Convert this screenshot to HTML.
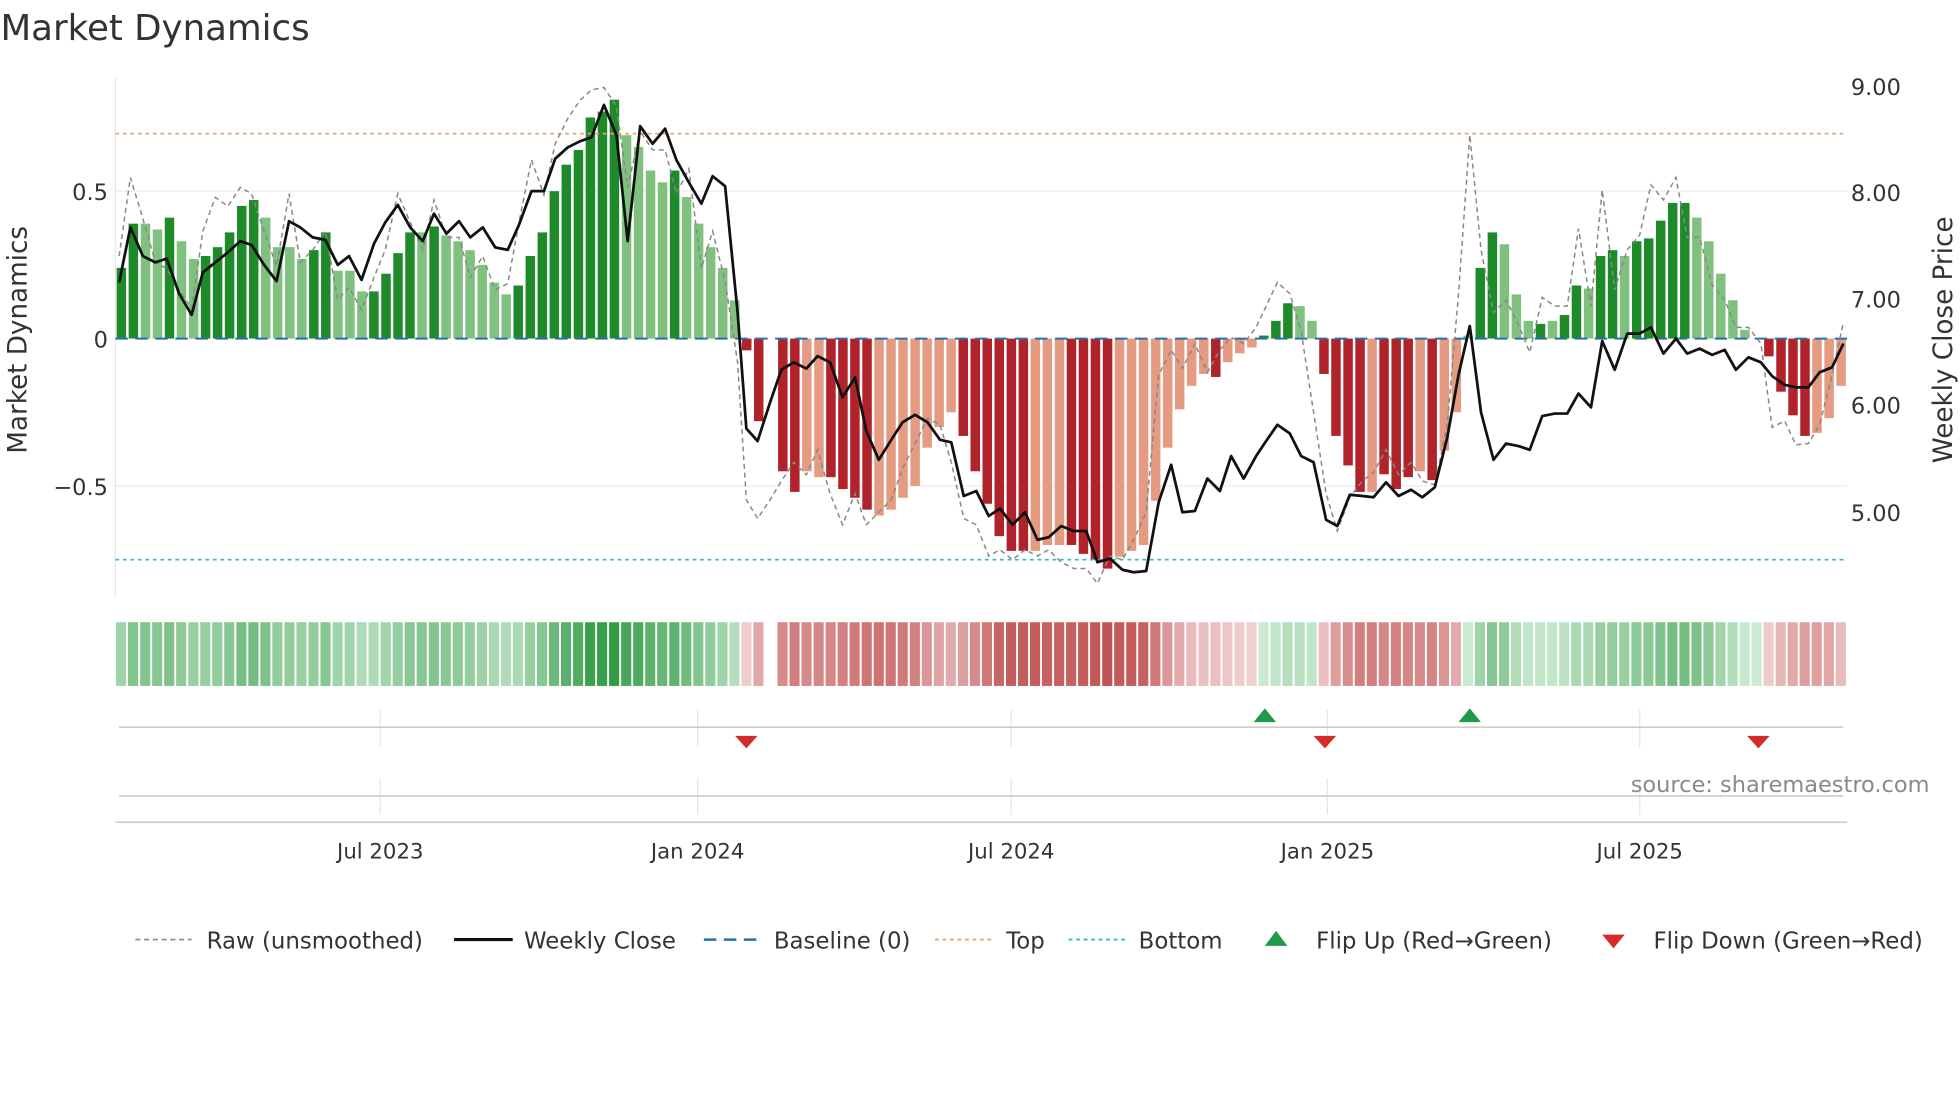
<!DOCTYPE html>
<html><head><meta charset="utf-8"><style>
html,body{margin:0;padding:0;background:#fff;width:1960px;height:1102px;overflow:hidden}
svg text{font-family:"DejaVu Sans","Liberation Sans",sans-serif;fill:#333}
</style></head><body>
<svg id="s" width="1960" height="1102" viewBox="0 0 1568 882" xmlns="http://www.w3.org/2000/svg">
<rect width="1568" height="882" fill="#fff"/>
<text x="0" y="32" font-size="28.5">Market Dynamics</text>
<line x1="92" y1="153" x2="1478" y2="153" stroke="#ececec"/>
<line x1="92" y1="389" x2="1478" y2="389" stroke="#ececec"/>
<line x1="92" y1="62" x2="92" y2="478" stroke="#e8e8e8"/>
<g id="bars"></g>
<line x1="92" y1="107" x2="1475" y2="107" stroke="#e8a070" stroke-dasharray="3,3" stroke-width="1.3"/>
<line x1="92" y1="448" x2="1475" y2="448" stroke="#2bbad0" stroke-dasharray="3,3" stroke-width="1.3"/>
<line x1="92" y1="271" x2="1478" y2="271" stroke="#2a6fa8" stroke-dasharray="10,6" stroke-width="1.6"/>
<polyline id="raw" fill="none" stroke="#888" stroke-width="1.2" stroke-dasharray="4,3"/>
<polyline id="close" fill="none" stroke="#111" stroke-width="2.2" stroke-linejoin="round"/>
<g font-size="18">
<text x="86" y="160" text-anchor="end">0.5</text>
<text x="86" y="278" text-anchor="end">0</text>
<text x="86" y="396" text-anchor="end">−0.5</text>
<text x="1481" y="76">9.00</text>
<text x="1481" y="161">8.00</text>
<text x="1481" y="246">7.00</text>
<text x="1481" y="331">6.00</text>
<text x="1481" y="417">5.00</text>
<text transform="translate(21,272) rotate(-90)" text-anchor="middle" font-size="21">Market Dynamics</text>
<text transform="translate(1562,272) rotate(-90)" text-anchor="middle" font-size="21">Weekly Close Price</text>
</g>
<g id="heat"></g>
<g stroke="#e6e6e6">
<line x1="304" y1="568" x2="304" y2="598"/><line x1="558" y1="568" x2="558" y2="598"/><line x1="809" y1="568" x2="809" y2="598"/><line x1="1062" y1="568" x2="1062" y2="598"/><line x1="1312" y1="568" x2="1312" y2="598"/>
<line x1="304" y1="623" x2="304" y2="652"/><line x1="558" y1="623" x2="558" y2="652"/><line x1="809" y1="623" x2="809" y2="652"/><line x1="1062" y1="623" x2="1062" y2="652"/><line x1="1312" y1="623" x2="1312" y2="652"/>
</g>
<line x1="95" y1="582" x2="1475" y2="582" stroke="#ccc" stroke-width="1.3"/>
<line x1="95" y1="637" x2="1475" y2="637" stroke="#ccc" stroke-width="1.3"/>
<line x1="92" y1="658" x2="1478" y2="658" stroke="#ccc" stroke-width="1.3"/>
<g fill="#1e9a48"><path d="M1003,578 L1021,578 L1012,567 Z"/><path d="M1167,578 L1185,578 L1176,567 Z"/></g>
<g fill="#d42a2a"><path d="M588,589 L606,589 L597,599 Z"/><path d="M1051,589 L1069,589 L1060,599 Z"/><path d="M1398,589 L1416,589 L1407,599 Z"/></g>
<text x="1544" y="634" text-anchor="end" font-size="18" style="fill:#8a8a8a">source: sharemaestro.com</text>
<g font-size="17" text-anchor="middle">
<text x="304" y="687">Jul 2023</text><text x="558" y="687">Jan 2024</text><text x="809" y="687">Jul 2024</text><text x="1062" y="687">Jan 2025</text><text x="1312" y="687">Jul 2025</text>
</g>
<g font-size="18.3">
<line x1="108" y1="752" x2="153" y2="752" stroke="#888" stroke-width="1.3" stroke-dasharray="4,3"/>
<text x="165" y="759">Raw (unsmoothed)</text>
<line x1="363" y1="752" x2="410" y2="752" stroke="#111" stroke-width="2.5"/>
<text x="419" y="759">Weekly Close</text>
<line x1="563" y1="752" x2="608" y2="752" stroke="#2a6fa8" stroke-width="2" stroke-dasharray="10,6"/>
<text x="619" y="759">Baseline (0)</text>
<line x1="748" y1="752" x2="793" y2="752" stroke="#e8a070" stroke-width="1.5" stroke-dasharray="3,3"/>
<text x="805" y="759">Top</text>
<line x1="855" y1="752" x2="900" y2="752" stroke="#2bbad0" stroke-width="1.5" stroke-dasharray="3,3"/>
<text x="911" y="759">Bottom</text>
<path d="M1012,757 L1030,757 L1021,745 Z" fill="#1e9a48"/>
<text x="1053" y="759">Flip Up (Red→Green)</text>
<path d="M1282,748 L1300,748 L1291,759 Z" fill="#d42a2a"/>
<text x="1323" y="759">Flip Down (Green→Red)</text>
</g>
</svg>
<script>
(function(){
var NS="http://www.w3.org/2000/svg";
function mix(a,c,t){var o=[];for(var k=0;k<3;k++){o.push(Math.round(a[k]+(c[k]-a[k])*t));}return 'rgb('+o.join(',')+')';}
function rect(g,x,y,w,h,f){var r=document.createElementNS(NS,'rect');r.setAttribute('x',x.toFixed(1));r.setAttribute('y',y.toFixed(1));r.setAttribute('width',w.toFixed(1));r.setAttribute('height',h.toFixed(1));r.setAttribute('fill',f);g.appendChild(r);}
var V=[[.24,1],[.39,1],[.39,0],[.37,0],[.41,1],[.33,0],[.27,0],[.28,1],[.31,1],[.36,1],[.45,1],[.47,1],[.41,0],[.31,0],[.31,0],[.27,0],[.30,1],[.36,1],[.23,0],[.23,0],[.16,0],[.16,1],[.22,1],[.29,1],[.36,1],[.36,0],[.38,1],[.35,0],[.33,0],[.30,0],[.25,0],[.19,0],[.15,0],[.18,1],[.28,1],[.36,1],[.50,1],[.59,1],[.64,1],[.75,1],[.77,1],[.81,1],[.69,0],[.65,0],[.57,0],[.53,0],[.57,1],[.48,0],[.39,0],[.31,0],[.24,0],[.13,0],[-.04,1],[-.28,1],[0,1],[-.45,1],[-.52,1],[-.45,0],[-.47,0],[-.47,1],[-.51,1],[-.54,1],[-.58,1],[-.60,0],[-.58,0],[-.54,0],[-.50,0],[-.37,0],[-.30,0],[-.25,0],[-.33,1],[-.45,1],[-.56,1],[-.67,1],[-.72,1],[-.72,1],[-.72,0],[-.70,0],[-.70,0],[-.70,1],[-.73,1],[-.75,1],[-.78,1],[-.74,0],[-.72,0],[-.70,0],[-.55,0],[-.37,0],[-.24,0],[-.16,0],[-.12,0],[-.13,1],[-.08,0],[-.05,0],[-.03,0],[.01,1],[.06,1],[.12,1],[.11,0],[.06,0],[-.12,1],[-.33,1],[-.43,1],[-.52,1],[-.52,0],[-.46,1],[-.51,1],[-.47,1],[-.45,0],[-.48,1],[-.38,0],[-.25,0],[.01,0],[.24,1],[.36,1],[.32,0],[.15,0],[.06,0],[.05,1],[.06,0],[.08,1],[.18,1],[.17,0],[.28,1],[.30,1],[.28,0],[.33,1],[.34,1],[.40,1],[.46,1],[.46,1],[.41,0],[.33,0],[.22,0],[.13,0],[.03,0],[0,0],[-.06,1],[-.18,1],[-.26,1],[-.33,1],[-.32,0],[-.27,0],[-.16,0]];
var n=V.length,x0=92,w=(1478-92)/n;
var gb=document.getElementById('bars'),gh=document.getElementById('heat');
for(var i=0;i<n;i++){var v=V[i][0],d=V[i][1],x=x0+i*w;
var c=v>=0?(d?'#1f8a2a':'#80c180'):(d?'#b0232a':'#e59a82');
var y=271-v*236,ty=Math.min(y,271),ht=Math.abs(271-y);
if(ht>0)rect(gb,x+1,ty,w-2,ht,c);
if(i==54)continue;
var t=Math.min(Math.abs(v)/0.8,1);
var col=v>=0?mix([205,235,210],[50,155,70],t):mix([242,212,212],[192,80,80],t);
rect(gh,x+0.5,498,w-1.5,51,col);}
var C="95,226 104,182 114,205 124,210 133,207 143,235 153,252 162,218 172,210 182,202 192,193 201,196 211,212 221,225 231,177 240,182 250,190 260,192 270,212 279,205 289,224 299,195 308,178 318,164 328,182 338,193 347,171 357,187 367,177 376,190 386,182 396,198 406,200 415,180 425,153 435,153 444,127 454,118 464,113 473,110 483,84 493,108 502,193 512,101 522,115 532,103 541,128 551,146 561,163 570,141 580,149 590,250 597,343 606,353 616,322 625,296 635,290 645,295 654,285 664,290 674,318 684,302 693,345 703,368 713,352 722,338 732,332 742,338 752,352 761,354 771,397 781,393 791,413 800,407 810,420 820,410 830,432 839,430 849,421 859,425 869,425 878,450 888,447 898,456 907,458 917,457 927,402 937,372 946,410 956,409 966,383 976,393 985,365 995,383 1005,365 1013,353 1022,340 1032,347 1041,365 1051,370 1061,416 1070,421 1080,396 1090,397 1099,398 1109,386 1119,397 1129,392 1138,398 1148,390 1158,350 1167,300 1176,261 1185,330 1195,368 1205,355 1215,357 1224,360 1234,333 1244,331 1254,331 1263,315 1273,326 1282,273 1292,296 1302,267 1312,267 1321,262 1331,283 1341,271 1350,283 1360,279 1370,284 1380,280 1389,296 1399,286 1409,290 1418,301 1428,308 1437,310 1447,310 1456,298 1466,294 1475,275";
var R="95,205 104,142 114,175 124,210 133,215 143,232 153,247 162,185 172,158 182,165 192,150 201,155 211,185 221,213 231,155 240,210 250,200 260,185 270,240 279,230 289,248 299,222 308,200 318,155 328,178 338,200 347,160 357,190 367,190 376,222 386,205 396,232 406,227 415,178 425,128 435,156 444,115 454,95 464,80 473,72 483,70 493,85 502,150 512,105 522,120 532,120 541,155 551,135 561,215 570,185 580,225 590,290 597,400 606,415 616,400 625,385 635,370 645,380 654,360 664,395 674,420 684,395 693,420 703,410 713,400 722,375 732,355 742,335 752,340 761,370 771,415 781,420 791,445 800,440 810,448 820,440 830,445 839,440 849,450 859,455 869,455 878,467 888,445 898,448 907,432 917,410 927,300 937,280 946,295 956,275 966,298 976,280 985,270 995,275 1005,262 1013,245 1022,226 1032,235 1041,265 1051,330 1061,395 1070,425 1080,398 1090,385 1099,378 1109,360 1119,380 1129,370 1138,385 1148,388 1158,340 1167,235 1176,108 1185,200 1195,250 1205,240 1215,260 1224,282 1234,238 1244,245 1254,245 1263,183 1273,245 1282,152 1292,232 1302,200 1312,188 1321,148 1331,160 1341,142 1350,190 1360,190 1370,228 1380,240 1389,262 1399,262 1409,275 1418,342 1428,337 1437,356 1447,355 1456,340 1466,300 1475,258";
document.getElementById('close').setAttribute('points',C);document.getElementById('raw').setAttribute('points',R);
})();
</script>
</body></html>
